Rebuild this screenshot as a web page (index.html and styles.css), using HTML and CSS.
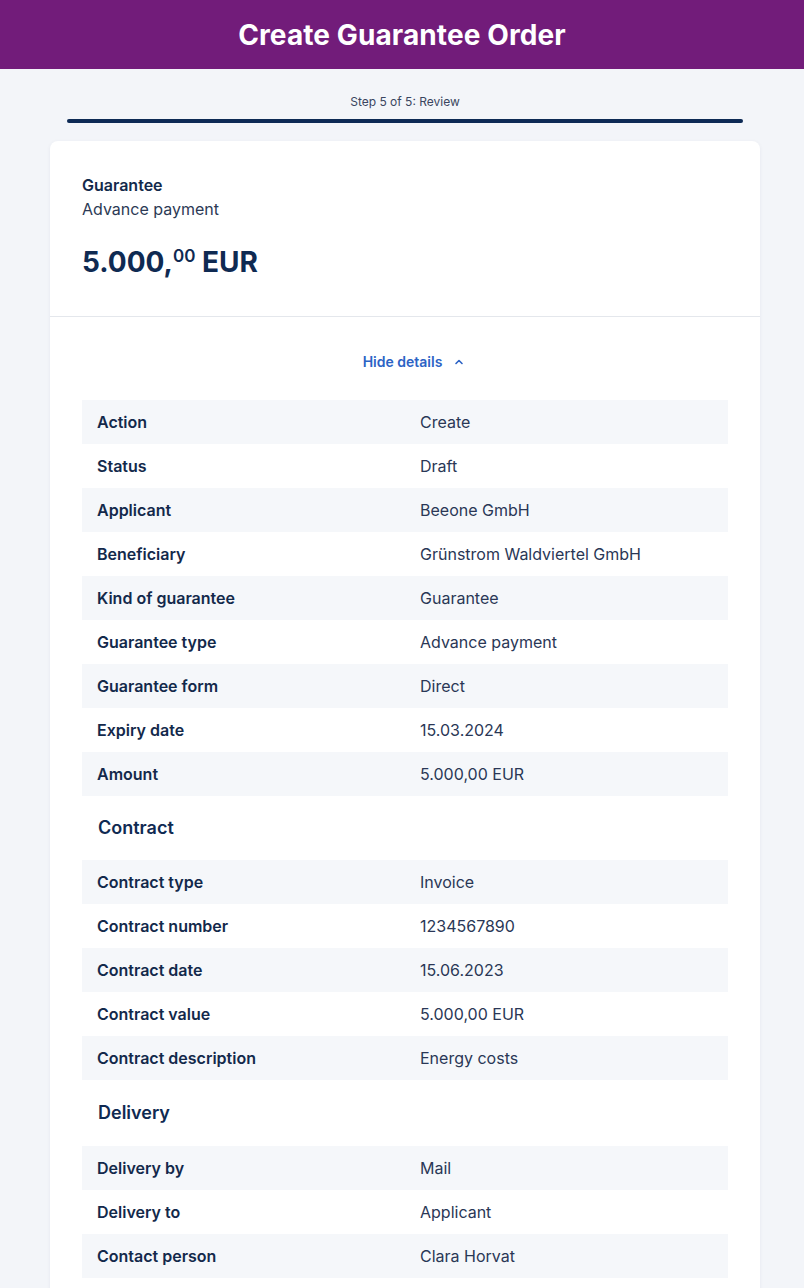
FILE: index.html
```html
<!DOCTYPE html>
<html lang="en">
<head>
<meta charset="utf-8">
<title>Create Guarantee Order</title>
<link rel="stylesheet" href="styles.css">
</head>
<body>
<header class="topbar">
  <h1 class="title">Create Guarantee Order</h1>
</header>
<main class="page">
  <div class="stepper">
    <div class="step-label">Step 5 of 5: Review</div>
    <div class="progress"><div class="progress-fill"></div></div>
  </div>
  <section class="card">
    <div class="summary">
      <div class="sum-title">Guarantee</div>
      <div class="sum-sub">Advance payment</div>
      <div class="amount">5.000,<sup class="cents">00</sup> EUR</div>
    </div>
    <div class="details">
      <button class="toggle" type="button">Hide details
        <svg class="chev" width="10" height="10" viewBox="0 0 10 10" aria-hidden="true"><path d="M2 6.5 L5 3.5 L8 6.5" fill="none" stroke="currentColor" stroke-width="1.6" stroke-linecap="round" stroke-linejoin="round"/></svg>
      </button>
      <div class="table">
        <div class="row"><div class="k">Action</div><div class="v">Create</div></div>
        <div class="row"><div class="k">Status</div><div class="v">Draft</div></div>
        <div class="row"><div class="k">Applicant</div><div class="v">Beeone GmbH</div></div>
        <div class="row"><div class="k">Beneficiary</div><div class="v">Grünstrom Waldviertel GmbH</div></div>
        <div class="row"><div class="k">Kind of guarantee</div><div class="v">Guarantee</div></div>
        <div class="row"><div class="k">Guarantee type</div><div class="v">Advance payment</div></div>
        <div class="row"><div class="k">Guarantee form</div><div class="v">Direct</div></div>
        <div class="row"><div class="k">Expiry date</div><div class="v">15.03.2024</div></div>
        <div class="row"><div class="k">Amount</div><div class="v">5.000,00 EUR</div></div>
      </div>
      <h2 class="section">Contract</h2>
      <div class="table">
        <div class="row"><div class="k">Contract type</div><div class="v">Invoice</div></div>
        <div class="row"><div class="k">Contract number</div><div class="v">1234567890</div></div>
        <div class="row"><div class="k">Contract date</div><div class="v">15.06.2023</div></div>
        <div class="row"><div class="k">Contract value</div><div class="v">5.000,00 EUR</div></div>
        <div class="row"><div class="k">Contract description</div><div class="v">Energy costs</div></div>
      </div>
      <h2 class="section section-next">Delivery</h2>
      <div class="table">
        <div class="row"><div class="k">Delivery by</div><div class="v">Mail</div></div>
        <div class="row"><div class="k">Delivery to</div><div class="v">Applicant</div></div>
        <div class="row"><div class="k">Contact person</div><div class="v">Clara Horvat</div></div>
      </div>
    </div>
  </section>
</main>
</body>
</html>
```

FILE: styles.css
```css
* { box-sizing: border-box; }
html, body {
  margin: 0;
  padding: 0;
  background: #f3f5f9;
  font-family: Inter, "Noto Sans", "Liberation Sans", sans-serif;
  color: #13294b;
}
.topbar {
  background: #721c7a;
  height: 69px;
  display: flex;
  align-items: center;
  justify-content: center;
}
.title {
  margin: 0;
  color: #ffffff;
  font-size: 28px;
  font-weight: 700;
  letter-spacing: 0.1px;
}
.page {
  padding: 0 44px 0 50px;
}
.stepper {
  padding: 25px 17px 0 17px;
  display: flex;
  flex-direction: column;
  align-items: stretch;
}
.step-label {
  text-align: center;
  font-size: 12px;
  line-height: 15px;
  color: #3a4560;
}
.progress {
  margin-top: 10px;
  height: 4px;
  border-radius: 2px;
  background: #dfe3ea;
}
.progress-fill {
  height: 100%;
  width: 100%;
  border-radius: 2px;
  background: #0d2a55;
}
.card {
  margin-top: 18px;
  background: #ffffff;
  border-radius: 8px;
  box-shadow: 0 1px 4px rgba(20, 40, 80, 0.06);
  min-height: 1200px;
}
.summary {
  padding: 32px 32px 36px 32px;
  border-bottom: 1px solid #e4e7ec;
}
.sum-title {
  font-size: 16px;
  line-height: 24px;
  font-weight: 600;
  color: #13294b;
}
.sum-sub {
  font-size: 16px;
  line-height: 24px;
  color: #2c3a55;
}
.amount {
  margin-top: 23px;
  font-size: 28px;
  line-height: 36px;
  font-weight: 700;
  color: #0f2a52;
}
.cents {
  font-size: 17px;
  line-height: 0;
  vertical-align: 0;
  position: relative;
  top: -10px;
  font-weight: 600;
}
.details {
  padding: 35px 32px 0 32px;
  display: flex;
  flex-direction: column;
}
.toggle {
  align-self: center;
  margin: 0 0 28px 17px;
  padding: 0;
  border: 0;
  background: none;
  font-family: inherit;
  font-size: 14px;
  line-height: 20px;
  font-weight: 600;
  color: #2c63c5;
  display: flex;
  align-items: center;
  gap: 12px;
  cursor: pointer;
}
.chev { display: block; }
.table {
  display: flex;
  flex-direction: column;
}
.row {
  display: grid;
  grid-template-columns: 1fr 1fr;
  height: 44px;
  align-items: center;
}
.row:nth-child(odd) { background: #f5f7fa; }
.k, .v {
  padding: 0 15px;
  font-size: 16px;
  line-height: 20px;
}
.k {
  font-weight: 600;
  color: #13294b;
}
.v {
  color: #2a3756;
}
.section {
  margin: 0;
  padding: 20px 16px;
  font-size: 18px;
  line-height: 24px;
  font-weight: 600;
  color: #0f2a52;
}
.section-next {
  padding: 21px 16px 21px 16px;
}
```
